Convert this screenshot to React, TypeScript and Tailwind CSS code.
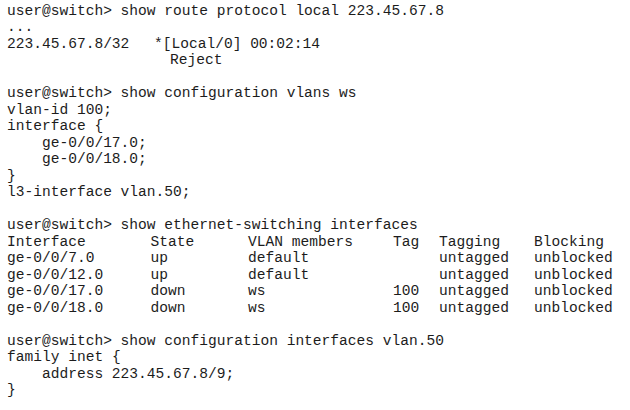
import React from "react";

const Line = ({ children }: { children?: React.ReactNode }) => (
  <div className="h-[16.5px] whitespace-pre">{children ?? " "}</div>
);

const rows = [
  ["Interface", "State", "VLAN members", "Tag", "Tagging", "Blocking"],
  ["ge-0/0/7.0", "up", "default", "", "untagged", "unblocked"],
  ["ge-0/0/12.0", "up", "default", "", "untagged", "unblocked"],
  ["ge-0/0/17.0", "down", "ws", "100", "untagged", "unblocked"],
  ["ge-0/0/18.0", "down", "ws", "100", "untagged", "unblocked"],
];

export default function App() {
  return (
    <div
      className="w-[630px] h-[410px] bg-white text-[#1c1c1c] pl-[7px] pt-[2.5px] text-[14.57px] leading-[16.5px] overflow-hidden"
      style={{ fontFamily: '"Liberation Mono", "Courier New", monospace' }}
    >
      <Line>user@switch&gt; show route protocol local 223.45.67.8</Line>
      <Line>...</Line>
      <div className="flex h-[16.5px] whitespace-pre">
        <span className="w-[147px]">223.45.67.8/32</span>
        <span>*[Local/0] 00:02:14</span>
      </div>
      <div className="flex h-[16.5px] whitespace-pre">
        <span className="w-[163px]"></span>
        <span>Reject</span>
      </div>
      <Line />
      <Line>user@switch&gt; show configuration vlans ws</Line>
      <Line>vlan-id 100;</Line>
      <Line>interface {"{"}</Line>
      <Line>    ge-0/0/17.0;</Line>
      <Line>    ge-0/0/18.0;</Line>
      <Line>{"}"}</Line>
      <Line>l3-interface vlan.50;</Line>
      <Line />
      <Line>user@switch&gt; show ethernet-switching interfaces</Line>
      {rows.map((r, i) => (
        <div key={i} className="flex h-[16.5px] whitespace-pre">
          <span className="w-[143.5px] shrink-0">{r[0]}</span>
          <span className="w-[97.5px] shrink-0">{r[1]}</span>
          <span className="w-[143px] shrink-0">{r[2]}</span>
          <span className="w-[48px] shrink-0 pl-[2px]">{r[3]}</span>
          <span className="w-[95px] shrink-0">{r[4]}</span>
          <span>{r[5]}</span>
        </div>
      ))}
      <Line />
      <Line>user@switch&gt; show configuration interfaces vlan.50</Line>
      <Line>family inet {"{"}</Line>
      <Line>    address 223.45.67.8/9;</Line>
      <Line>{"}"}</Line>
    </div>
  );
}
